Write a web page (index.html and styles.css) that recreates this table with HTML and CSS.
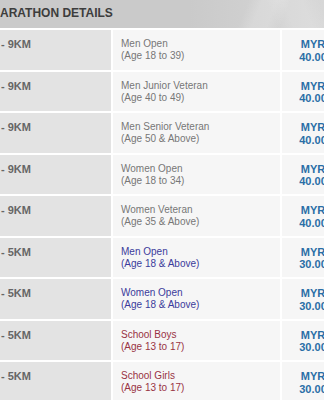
FILE: index.html
```html
<!DOCTYPE html>
<html lang="en">
    <head>
        <meta charset="UTF-8" />
        <meta name="viewport" content="width=device-width, initial-scale=1.0" />
        <title>Marathon Details</title>
        <link rel="stylesheet" href="styles.css">
    </head>
    <body>
        <div class="details">
            <h2 class="details-title">MARATHON DETAILS</h2>
            <div class="fees">
                <div class="distance">- 9KM</div>
                <div class="category">Men Open<br>(Age 18 to 39)</div>
                <div class="price">MYR<br>40.00</div>

                <div class="distance">- 9KM</div>
                <div class="category">Men Junior Veteran<br>(Age 40 to 49)</div>
                <div class="price">MYR<br>40.00</div>

                <div class="distance">- 9KM</div>
                <div class="category">Men Senior Veteran<br>(Age 50 &amp; Above)</div>
                <div class="price">MYR<br>40.00</div>

                <div class="distance">- 9KM</div>
                <div class="category">Women Open<br>(Age 18 to 34)</div>
                <div class="price">MYR<br>40.00</div>

                <div class="distance">- 9KM</div>
                <div class="category">Women Veteran<br>(Age 35 &amp; Above)</div>
                <div class="price">MYR<br>40.00</div>

                <div class="distance">- 5KM</div>
                <div class="category fun">Men Open<br>(Age 18 &amp; Above)</div>
                <div class="price">MYR<br>30.00</div>

                <div class="distance">- 5KM</div>
                <div class="category fun">Women Open<br>(Age 18 &amp; Above)</div>
                <div class="price">MYR<br>30.00</div>

                <div class="distance">- 5KM</div>
                <div class="category school">School Boys<br>(Age 13 to 17)</div>
                <div class="price">MYR<br>30.00</div>

                <div class="distance">- 5KM</div>
                <div class="category school">School Girls<br>(Age 13 to 17)</div>
                <div class="price">MYR<br>30.00</div>
            </div>
        </div>
    </body>
</html>
```

FILE: styles.css
```css
* {
    box-sizing: border-box;
}

body {
    margin: 0;
    overflow: hidden;
    background-color: #fff;
    font-family: "Liberation Sans", Arial, sans-serif;
}

.details {
    width: 344px;
}

.details-title {
    margin: 0 0 2px 0;
    height: 28px;
    padding-top: 6px;
    font-size: 12px;
    line-height: 15px;
    text-indent: -10px;
    color: #3d3d3d;
    background:
        linear-gradient(112deg, transparent 70%, rgba(255, 255, 255, 0.18) 74%, rgba(255, 255, 255, 0.18) 78%, transparent 82%),
        linear-gradient(68deg, transparent 78%, rgba(255, 255, 255, 0.15) 83%, rgba(255, 255, 255, 0.15) 88%, transparent 93%),
        linear-gradient(to right, #cacaca 55%, #d9d9d9 100%);
}

.fees {
    display: grid;
    grid-template-columns: 111px 167px 62px;
    grid-auto-rows: 39.5px;
    gap: 2px;
}

.distance {
    padding: 8px 0 0 1px;
    font-size: 11px;
    font-weight: bold;
    line-height: 13px;
    color: #666;
    background-color: #e3e3e3;
}

.category {
    padding: 8px 0 0 8px;
    font-size: 10px;
    line-height: 12px;
    color: #777;
    background-color: #f6f6f6;
}

.category.fun {
    color: #3b3b9b;
}

.category.school {
    color: #993344;
}

.price {
    padding-top: 8px;
    text-align: center;
    font-size: 11px;
    font-weight: bold;
    line-height: 12.5px;
    color: #2a6ea6;
    background-color: #f6f6f6;
}
```
